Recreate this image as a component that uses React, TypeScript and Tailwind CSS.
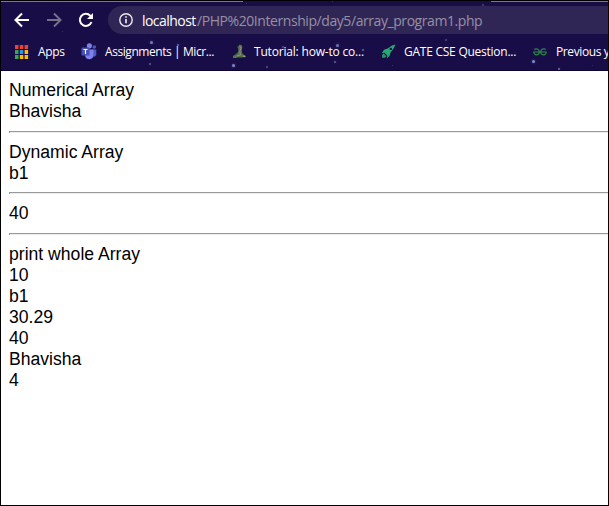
import type { ReactNode } from 'react';

function AppsIcon() {
  const colors = ['#ea4335', '#ea4335', '#ea4335', '#34a853', '#2196f3', '#fbbc04', '#34a853', '#fbbc04', '#fbbc04'];
  return (
    <svg width="14" height="14" viewBox="0 0 14 14" className="block">
      {colors.map((c, i) => (
        <rect key={i} x={(i % 3) * 4.8} y={Math.floor(i / 3) * 5} width="3.5" height="4" fill={c} />
      ))}
    </svg>
  );
}

function TeamsIcon() {
  return (
    <svg width="16" height="17" viewBox="0 0 16 17" className="block">
      <circle cx="13.3" cy="4" r="1.8" fill="#4f59c4" />
      <path d="M11 6.5h4.3v4.8c0 2-2 3-4.3 2z" fill="#4f59c4" />
      <circle cx="8.4" cy="2.8" r="2.6" fill="#7b83eb" />
      <path d="M4 6.5h8.5v5.3c0 6-8.500 6-8.500 0z" fill="#7b83eb" />
      <rect x="0.500" y="4.500" width="8" height="8" rx="0.6" fill="#4650b8" />
      <path d="M2.500 6.500h4M4.500 6.500v4.500" stroke="#fff" strokeWidth="1.2" />
    </svg>
  );
}

function StatueIcon() {
  return (
    <svg width="14" height="15" viewBox="0 0 14 15" className="block">
      <path d="M7 1c2-.8 3.500.2 3.300 2.200L9.700 7l.8 3 2.700 1.500v1.700H6.500L4 14H1v-2.200L5 10l1.500-3L6 3.500z" fill="#5a7350" />
      <path d="M8 2.500l1 2-1.200 3 .7 3.500-3.500 1" stroke="#8b8c78" fill="none" />
      <path d="M6 2v2M5.500 9L2 12M7 13h3" stroke="#376a32" fill="none" />
      <path d="M11 12.300h2.500" stroke="#80bd64" />
    </svg>
  );
}

function RocketIcon() {
  return (
    <svg width="15" height="15" viewBox="0 0 15 15" className="block">
      <path d="M14.500 0.500l-3.500 1-4.300 3-3.700 1.300L.800 9l2.700-.3 2.800 2.800-.3 3 2.600-2.800 1-3.200 3-4z" fill="#28a873" />
      <path d="M2.500 9.300L.900 11.500 1.500 14l3-.5 1-1.500z" fill="#229b67" />
      <circle cx="9.800" cy="4.900" r="1.200" fill="#150d45" />
      <path d="M3.200 9.600l2.300 2.300" stroke="#150d45" strokeWidth="0.7" />
    </svg>
  );
}

function GeeksIcon() {
  return (
    <svg width="14" height="8" viewBox="0 0 14 8" className="block" fill="none" stroke="#2f8d46" strokeWidth="1.2">
      <path d="M1.300 1.400C4 .2 6.300 1.300 6.300 4S4.300 7.200 2.500 6.700C1 6.300.8 5 .8 4h12.400c0 1 0 2.300-1.500 2.700-1.800.5-4-.2-4-2.700s2.300-3.800 5-2.600" />
    </svg>
  );
}

function Bookmark({ icon, children, className }: { icon: ReactNode; children: ReactNode; className: string }) {
  return (
    <div className={`flex items-center shrink-0 whitespace-pre ${className}`}>
      {icon}
      {children}
    </div>
  );
}

function Stars() {
  const stars = [
    [150, 41, 3, 0.65], [149, 63, 2, 0.45], [177, 44, 2, 0.55], [62, 31, 1, 0.3],
    [232, 64, 3, 0.75], [266, 66, 2, 0.4], [336, 44, 3, 0.6], [334, 61, 2, 0.5],
    [362, 49, 2, 0.5], [282, 46, 2, 0.4], [445, 39, 2, 0.35], [482, 4, 2, 0.3],
    [532, 60, 3, 0.75], [558, 68, 2, 0.6], [592, 65, 1, 0.2], [332, 1, 1, 0.3],
    [392, 65, 1, 0.3], [246, 3, 1, 0.3],
  ];
  return (
    <div className="absolute inset-0 pointer-events-none">
      {stars.map(([x, y, size, opacity]) => (
        <span
          key={`${x}-${y}`}
          className="absolute rounded-full bg-[#a9b5ee] shadow-[0_0_3px_#4268cc]"
          style={{ left: x - 1, top: y - 1, width: size, height: size, opacity }}
        />
      ))}
    </div>
  );
}

function Browser() {
  return (
    <header className="relative h-[70px] shrink-0 bg-[#180d46] border-b border-[#100530] overflow-hidden font-['Open_Sans','Noto_Sans',sans-serif]">
      <Stars />
      <div className="flex justify-between h-px">
        <span className="w-[242px] bg-[#7c7787]" />
        <span className="w-[117px] bg-[#7c7787]" />
      </div>
      <div className="relative h-[32px] pt-[4px] flex">
        <div className="flex items-center w-[107px] h-[28px] pl-[13px]">
          <svg width="16" height="16" viewBox="0 0 16 16" fill="none" stroke="#fff" strokeWidth="2">
            <path d="M15 8H2M8 1.500L1.500 8 8 14.500" />
          </svg>
          <svg className="ml-[16px]" width="16" height="16" viewBox="0 0 16 16" fill="none" stroke="#777087" strokeWidth="2">
            <path d="M1 8h13M8 1.500L14.500 8 8 14.500" />
          </svg>
          <svg className="ml-[16px]" width="16" height="16" viewBox="0 0 16 16" fill="none" stroke="#fff" strokeWidth="2">
            <path d="M13.500 10A6 6 0 1 1 12.300 3.800L14 5.500" />
            <path d="M15 1v6H9z" fill="#fff" stroke="none" />
          </svg>
        </div>
        <div className="h-[28px] flex-1 rounded-l-full bg-[#302655] flex items-center pl-[11px] whitespace-pre text-[14px]">
          <svg width="14" height="14" viewBox="0 0 14 14" fill="none" stroke="#eceaf1" strokeWidth="1.400">
            <circle cx="7" cy="7" r="6.200" />
            <path d="M7 6v4.300M7 3.300v1.500" strokeWidth="1.700" />
          </svg>
          <span className="ml-[9px] w-[55px] text-white tracking-[-0.55px]">localhost</span>
          <span className="text-[#9690a5] tracking-[-0.43px]">/PHP%20Internship/day5/array_program1.php</span>
        </div>
      </div>
      <div className="relative h-[36px] flex items-center text-white text-[12px] pb-[1px]">
        <Bookmark className="ml-[14px] w-[66px]" icon={<AppsIcon />}>
          <span className="ml-[9px] tracking-[-0.35px]">Apps</span>
        </Bookmark>
        <Bookmark className="w-[151px]" icon={<TeamsIcon />}>
          <span className="ml-[8px] tracking-[-0.43px]">Assignments | Micr...</span>
        </Bookmark>
        <Bookmark className="w-[149px]" icon={<StatueIcon />}>
          <span className="ml-[8px] tracking-[-0.19px]">Tutorial: how-to co...</span>
        </Bookmark>
        <Bookmark className="w-[152px]" icon={<RocketIcon />}>
          <span className="ml-[8px] tracking-[-0.25px]">GATE CSE Question...</span>
        </Bookmark>
        <Bookmark className="" icon={<GeeksIcon />}>
          <span className="ml-[9px] tracking-[-0.4px]">Previous y</span>
        </Bookmark>
      </div>
    </header>
  );
}

function Rule({ className = 'my-[9px]' }: { className?: string }) {
  return <hr className={`h-[2px] border-0 border-t border-t-[#999] border-l border-l-[#999] bg-[#ededed] ${className}`} />;
}

export default function App() {
  return (
    <div className="w-[609px] h-[506px] border border-black bg-white overflow-hidden flex flex-col">
      <Browser />
      <main className="pt-[9px] pl-[8px] text-[17.6px] leading-[21px] text-black font-['Liberation_Sans',Arial,sans-serif]">
        <p>Numerical Array</p>
        <p>Bhavisha</p>
        <Rule />
        <p>Dynamic Array</p>
        <p>b1</p>
        <Rule className="mt-[8px] mb-[9px]" />
        <p>40</p>
        <Rule />
        <p>print whole Array</p>
        <p>10</p>
        <p>b1</p>
        <p>30.29</p>
        <p>40</p>
        <p>Bhavisha</p>
        <p>4</p>
      </main>
    </div>
  );
}
